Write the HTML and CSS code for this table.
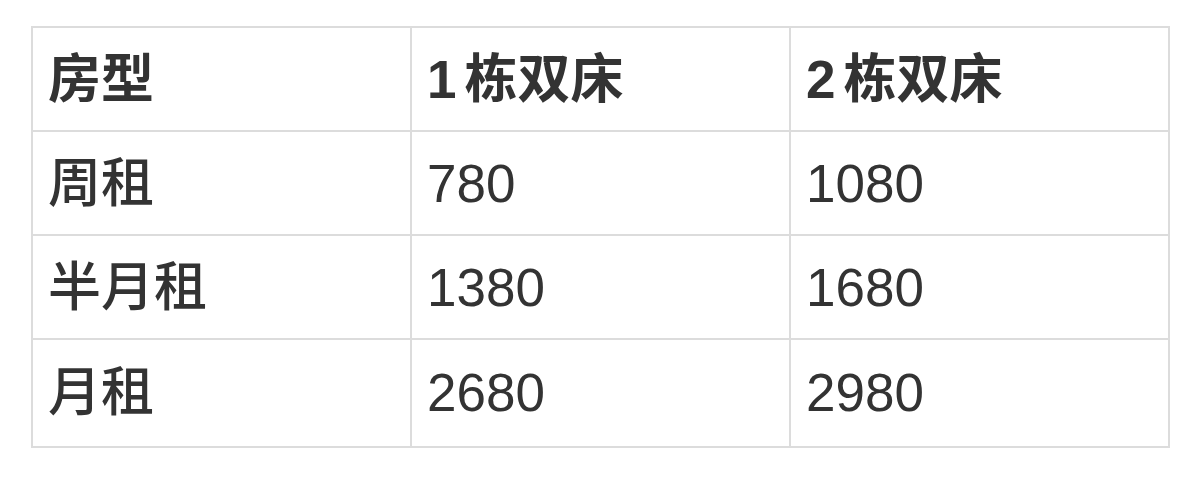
FILE: index.html
```html
<!DOCTYPE html>
<html lang="zh">
<head>
<meta charset="utf-8">
<link rel="stylesheet" href="styles.css">
</head>
<body>
<table class="price">
  <tr class="head">
    <th>房型</th><th><span class="num">1</span>栋双床</th><th><span class="num">2</span>栋双床</th>
  </tr>
  <tr>
    <td class="label">周租</td><td>780</td><td>1080</td>
  </tr>
  <tr>
    <td class="label">半月租</td><td>1380</td><td>1680</td>
  </tr>
  <tr class="last">
    <td class="label">月租</td><td>2680</td><td>2980</td>
  </tr>
</table>
</body>
</html>
```
FILE: styles.css
```css
html, body {
  margin: 0;
  background: #ffffff;
}
body {
  padding: 26px 0 0 31px;
}
.price {
  border-collapse: collapse;
  width: 1139px;
  table-layout: fixed;
  font-family: "Liberation Sans", "Noto Sans CJK SC", sans-serif;
  font-size: 53px;
  color: #333333;
}
.price th,
.price td {
  border: 2px solid #dcdcdc;
  height: 102px;
  padding: 0 0 0 15px;
  text-align: left;
  vertical-align: middle;
  line-height: 1;
}
.price th {
  font-weight: 700;
}
.price .num {
  margin-right: 8px;
}
.price td.label {
  font-weight: 500;
}
.price td {
  font-weight: 400;
}
.price tr.last td {
  height: 104px;
  padding-bottom: 2px;
}
```
